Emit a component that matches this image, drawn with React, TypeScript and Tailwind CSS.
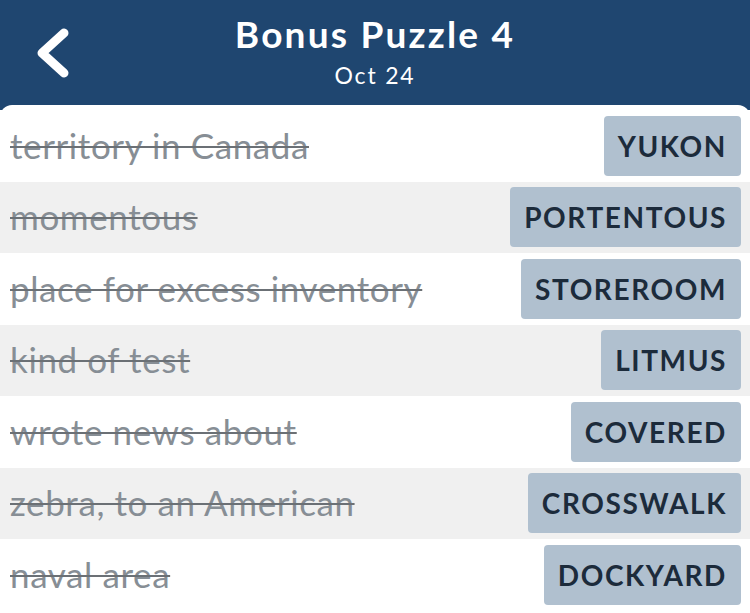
const clues = [
  { clue: "territory in Canada", answer: "YUKON" },
  { clue: "momentous", answer: "PORTENTOUS" },
  { clue: "place for excess inventory", answer: "STOREROOM" },
  { clue: "kind of test", answer: "LITMUS" },
  { clue: "wrote news about", answer: "COVERED" },
  { clue: "zebra, to an American", answer: "CROSSWALK" },
  { clue: "naval area", answer: "DOCKYARD" },
];

export default function App() {
  return (
    <div
      className="w-[750px] h-[613px] overflow-hidden bg-[#1f4670] flex flex-col"
      style={{ fontFamily: "Lato, 'Open Sans', sans-serif" }}
    >
      {/* Header */}
      <div className="relative h-[105px] shrink-0 flex flex-col items-center">
        <button className="absolute left-[30px] top-[24px]">
          <svg width="46" height="58" viewBox="0 0 46 58">
            <polyline
              points="34,9 12,29 34,49"
              fill="none"
              stroke="white"
              strokeWidth="9"
              strokeLinecap="round"
              strokeLinejoin="round"
            />
          </svg>
        </button>
        <div className="mt-[11px] text-white text-[37px] font-bold leading-[46px] tracking-[2.2px]">
          Bonus Puzzle 4
        </div>
        <div className="mt-[4px] text-white text-[23px] leading-[28px] tracking-[1.8px]">Oct 24</div>
      </div>

      {/* List */}
      <div className="flex-1 bg-white rounded-t-[12px] pt-[5px]">
        {clues.map((c, i) => (
          <div
            key={c.clue}
            className={
              "h-[71.5px] flex items-center justify-between pl-[10px] pr-[9px] " +
              (i % 2 === 1 ? "bg-[#f0f0f0]" : "bg-white")
            }
          >
            <span className="text-[35px] leading-[42px] -mt-[2px] text-[#878e95] tracking-[0.6px] line-through decoration-[#6b7075] decoration-[1.5px]">
              {c.clue}
            </span>
            <span className="h-[60px] px-[14px] flex items-center rounded-[4px] bg-[#b0c0cf] text-[#1c2b3b] text-[28px] font-bold tracking-[1.6px]">
              {c.answer}
            </span>
          </div>
        ))}
      </div>
    </div>
  );
}
